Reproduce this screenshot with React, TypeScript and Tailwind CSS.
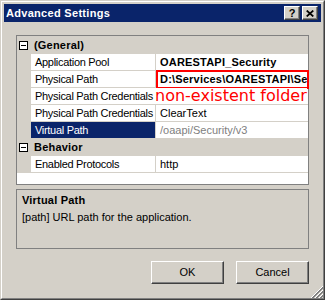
import React from "react";

type PropItem = {
  label: string;
  value?: string;
  bold?: boolean;
  readOnly?: boolean;
  selected?: boolean;
};

const general: PropItem[] = [
  { label: "Application Pool", value: "OARESTAPI_Security", bold: true },
  { label: "Physical Path", value: "D:\\Services\\OARESTAPI\\Security", bold: true },
  { label: "Physical Path Credentials" },
  { label: "Physical Path Credentials", value: "ClearText" },
  { label: "Virtual Path", value: "/oaapi/Security/v3", readOnly: true, selected: true },
];

const behavior: PropItem[] = [{ label: "Enabled Protocols", value: "http" }];

function Collapse() {
  return (
    <span className="flex h-[9px] w-[9px] items-center justify-center border border-[#000000] bg-white">
      <span className="h-px w-[5px] bg-[#000000]" />
    </span>
  );
}

function Category({ title, first }: { title: string; first?: boolean }) {
  return (
    <div
      className={`flex h-[17px] items-center bg-[#d4d0c8] ${first ? "pt-[2px]" : "border-t border-[#d4d0c8]"}`}
    >
      <div className="flex w-[14px] shrink-0 pl-[2px]">
        <Collapse />
      </div>
      <span className="pl-[3px] text-[11px] font-bold tracking-[0.2px] text-black">{title}</span>
    </div>
  );
}

function PropRow({ item, last }: { item: PropItem; last?: boolean }) {
  return (
    <div
      className={`flex border-t border-[#d4d0c8] bg-white ${last ? "h-[18px] border-b" : "h-[17px]"}`}
    >
      <div className="w-[14px] shrink-0 bg-[#d4d0c8]" />
      <div
        className={`flex w-[125px] shrink-0 items-center overflow-hidden whitespace-nowrap border-r border-[#d4d0c8] pl-[4px] text-[11px] tracking-[-0.3px] ${
          item.selected ? "bg-[#0a246a] text-white" : "text-black"
        }`}
      >
        {item.label}
      </div>
      <div
        className={`flex min-w-0 flex-1 items-center overflow-hidden whitespace-nowrap pl-[4px] text-[11px] ${
          item.bold ? "font-bold tracking-[0.2px]" : ""
        } ${item.readOnly ? "text-[#808080]" : "text-black"}`}
      >
        {item.value}
      </div>
    </div>
  );
}

function Button({ children }: { children: React.ReactNode }) {
  return (
    <button className="flex h-[23px] w-[73px] items-center justify-center border border-b-[#404040] border-l-white border-r-[#404040] border-t-white bg-[#d4d0c8] text-[11px] text-black shadow-[inset_-1px_-1px_#808080]">
      {children}
    </button>
  );
}

function CaptionButton({ children }: { children: React.ReactNode }) {
  return (
    <span className="flex h-[14px] w-[16px] items-center justify-center border border-b-[#404040] border-l-white border-r-[#404040] border-t-white bg-[#d4d0c8] text-[11px] font-bold leading-none text-black shadow-[inset_-1px_-1px_#808080]">
      {children}
    </span>
  );
}

function SizeGrip() {
  return (
    <svg
      width="12"
      height="12"
      viewBox="0 0 12 12"
      shapeRendering="crispEdges"
      className="absolute bottom-0 right-0"
    >
      {[0, 4, 8].map((o) => (
        <g key={o}>
          <line x1={o} y1={12} x2={12} y2={o} stroke="#ffffff" />
          <line x1={o + 1} y1={12} x2={12} y2={o + 1} stroke="#808080" />
          <line x1={o + 2} y1={12} x2={12} y2={o + 2} stroke="#808080" />
        </g>
      ))}
    </svg>
  );
}

export default function App() {
  return (
    <div className="h-[300px] w-[325px] border border-b-[#404040] border-l-[#d4d0c8] border-r-[#404040] border-t-[#d4d0c8] font-['Liberation_Sans',Arial,sans-serif]">
      <div className="relative flex h-full flex-col border border-b-[#808080] border-l-white border-r-[#808080] border-t-white bg-[#d4d0c8] p-[2px]">
        {/* title bar */}
        <div className="flex h-[18px] shrink-0 items-center justify-between bg-[#0a246a] pl-[2px] pr-[3px]">
          <span className="text-[11px] font-bold tracking-[0.3px] text-white">Advanced Settings</span>
          <div className="flex gap-[2px]">
            <CaptionButton>?</CaptionButton>
            <CaptionButton>
              <svg width="8" height="7" viewBox="0 0 8 7">
                <path d="M0.7 0.5L7.3 6.5M7.3 0.5L0.7 6.5" stroke="#000" strokeWidth="1.7" />
              </svg>
            </CaptionButton>
          </div>
        </div>

        <div className="flex flex-col px-[12px] pt-[13px]">
          {/* property grid */}
          <div className="relative h-[150px] border border-[#808080] bg-white">
            <Category title="(General)" first />
            {general.map((item, i) => (
              <PropRow key={i} item={item} />
            ))}
            <Category title="Behavior" />
            {behavior.map((item, i) => (
              <PropRow key={i} item={item} last={i === behavior.length - 1} />
            ))}

            {/* annotation */}
            <div className="absolute left-[139px] top-[34px] h-[19px] w-[153px] border-2 border-[#ff0000]" />
            <div className="absolute left-[138px] top-[52px] w-[152px] whitespace-nowrap bg-white font-['DejaVu_Sans',sans-serif] text-[16px] leading-[16px] text-[#ff0000]">
              non-existent folder
            </div>
          </div>

          {/* description */}
          <div className="mt-[4px] h-[60px] border border-[#808080] bg-[#d4d0c8] px-[5px] pt-[4px] text-[11px] leading-[13px] text-black">
            <div className="font-bold tracking-[0.2px]">Virtual Path</div>
            <div className="mt-[4px]">[path] URL path for the application.</div>
          </div>

          <div className="mt-[12px] flex justify-end gap-[12px]">
            <Button>OK</Button>
            <Button>Cancel</Button>
          </div>
        </div>

        <SizeGrip />
      </div>
    </div>
  );
}
